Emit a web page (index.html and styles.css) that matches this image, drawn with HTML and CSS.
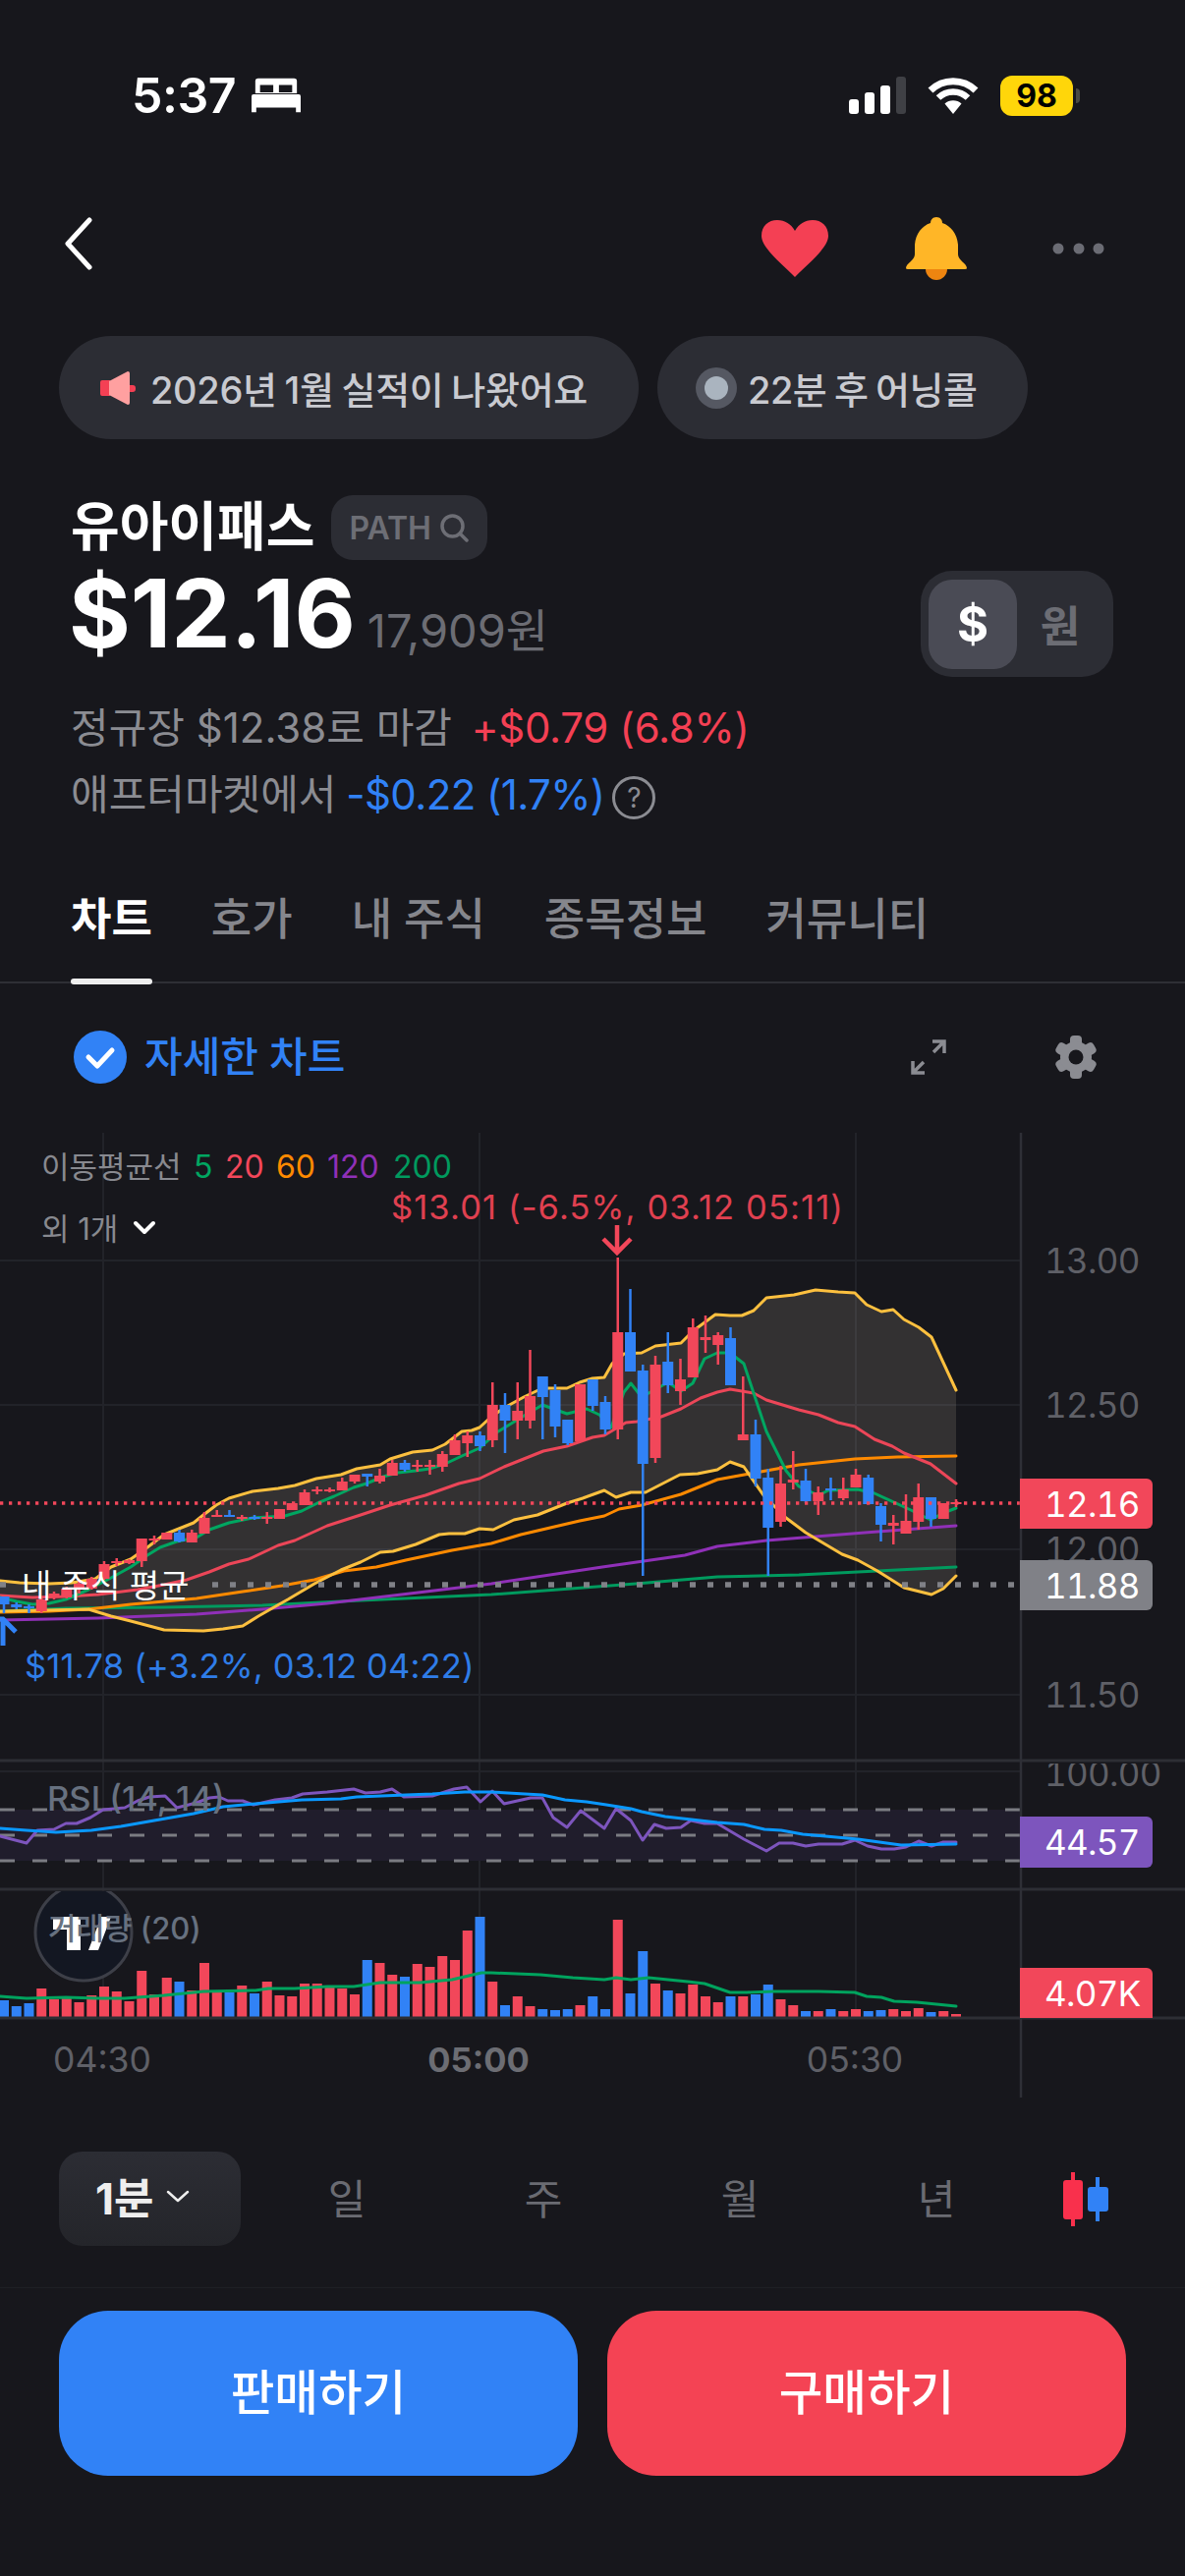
FILE: index.html
```html
<!DOCTYPE html>
<html lang="ko">
<head>
    <meta charset="UTF-8">
    <meta name="viewport" content="width=device-width, initial-scale=1.0">
    <title>유아이패스 차트</title>
    <link rel="stylesheet" href="styles.css">
</head>
<body>
    <div class="status-bar">
        <div class="status-left">
            <span class="clock">5:37</span>
            <svg class="bed" width="50" height="36" viewBox="0 0 52 36">
                <path fill="#fff" d="M7 0h38a3 3 0 0 1 3 3v13H4V3a3 3 0 0 1 3-3z"/>
                <path fill="#17171c" d="M9 7h14v8H9zM29 7h14v8H29z"/>
                <path fill="#fff" d="M2 17h48a2 2 0 0 1 2 2v17h-5v-5H5v5H0V19a2 2 0 0 1 2-2z"/>
            </svg>
        </div>
        <div class="status-right">
            <svg width="58" height="38" viewBox="0 0 58 38">
                <rect x="0" y="23" width="10" height="15" rx="3" fill="#fff"/>
                <rect x="16" y="16" width="10" height="22" rx="3" fill="#fff"/>
                <rect x="32" y="9" width="10" height="29" rx="3" fill="#fff"/>
                <rect x="48" y="0" width="10" height="38" rx="3" fill="#3f4045"/>
            </svg>
            <svg class="wifi" width="52" height="38" viewBox="0 0 52 38">
                <path fill="none" stroke="#fff" stroke-width="7" d="M3 14A33 33 0 0 1 49 14"/>
                <path fill="none" stroke="#fff" stroke-width="6.5" d="M11 21.500A21.500 21.500 0 0 1 41 21.500"/>
                <path fill="#fff" d="M26 38L17.500 27.500A13 13 0 0 1 34.500 27.500z"/>
            </svg>
            <span class="battery">98</span>
        </div>
    </div>

    <div class="nav">
        <svg width="30" height="54" viewBox="0 0 30 54">
            <path fill="none" stroke="#fff" stroke-width="5" stroke-linecap="round" stroke-linejoin="round" d="M26 3L4 27l22 24"/>
        </svg>
        <div class="nav-actions">
            <svg width="68" height="58" viewBox="0 0 68 58">
                <path fill="#f44054" d="M34 58C20 44 0 28 0 16 0 6 7 0 16 0c8 0 14 4 18 11C38 4 44 0 52 0c9 0 16 6 16 16 0 12-20 28-34 42z"/>
            </svg>
            <svg class="bell" width="62" height="64" viewBox="0 0 62 64">
                <path fill="#ee8510" d="M20 53h22c0 6-5 11-11 11s-11-5-11-11z"/>
                <path fill="#ffb627" d="M31 0c-4 0-6 3-6 6-9 3-15 11-16 22v10c0 6-9 9-9 14q0 1 2 1h58q2 0 2-1c0-5-9-8-9-14V28c-1-11-7-19-16-22 0-3-2-6-6-6z"/>
            </svg>
            <svg class="more" width="54" height="12" viewBox="0 0 54 12">
                <circle cx="6" cy="6" r="5.500" fill="#6b6c74"/>
                <circle cx="27" cy="6" r="5.500" fill="#6b6c74"/>
                <circle cx="47" cy="6" r="5.500" fill="#6b6c74"/>
            </svg>
        </div>
    </div>

    <div class="pills">
        <div class="pill pill-earnings">
            <svg width="36" height="34" viewBox="0 0 36 34">
                <path fill="#f44054" d="M2 9h8v16H2a2 2 0 0 1-2-2V11a2 2 0 0 1 2-2zM30 14h3a3 3 0 0 1 3 3v1a3 3 0 0 1-3 3h-3z"/>
                <path fill="#ffa0a0" d="M9 10L28 0a2 2 0 0 1 2 2v30a2 2 0 0 1-2 2L9 24z"/>
            </svg>
            <span>2026년 1월 실적이 나왔어요</span>
        </div>
        <div class="pill pill-call">
            <svg width="42" height="42" viewBox="0 0 42 42">
                <circle cx="21" cy="21" r="21" fill="#555862"/>
                <circle cx="21" cy="21" r="12" fill="#aab4bf"/>
            </svg>
            <span>22분 후 어닝콜</span>
        </div>
    </div>

    <div class="name-row">
        <h1 class="name">유아이패스</h1>
        <div class="ticker">
            <span>PATH</span>
            <svg width="30" height="30" viewBox="0 0 30 30">
                <circle cx="13.500" cy="13.500" r="10.500" fill="none" stroke="#6d6e75" stroke-width="3.500"/>
                <path stroke="#6d6e75" stroke-width="3.500" stroke-linecap="round" d="M21 21l7 7"/>
            </svg>
        </div>
    </div>

    <div class="price-row">
        <div class="price">
            <span class="price-main">$12.16</span>
            <span class="price-krw">17,909원</span>
        </div>
        <div class="currency">
            <span class="currency-on">$</span>
            <span class="currency-off">원</span>
        </div>
    </div>

    <div class="changes">
        <div>정규장 $12.38로 마감 <span class="up">+$0.79 (6.8%)</span></div>
        <div>애프터마켓에서 <span class="down">-$0.22 (1.7%)</span> <span class="help">?</span></div>
    </div>

    <div class="tabs">
        <span class="tab active">차트</span>
        <span class="tab">호가</span>
        <span class="tab">내 주식</span>
        <span class="tab">종목정보</span>
        <span class="tab">커뮤니티</span>
    </div>

    <div class="chart-options">
        <div class="detail-toggle">
            <svg width="54" height="54" viewBox="0 0 54 54">
                <circle cx="27" cy="27" r="27" fill="#3182f6"/>
                <path fill="none" stroke="#fff" stroke-width="5" stroke-linecap="round" stroke-linejoin="round" d="M15 27l9 9 15-16"/>
            </svg>
            <span class="detail-text">자세한 차트</span>
        </div>
        <div class="chart-tools">
            <svg width="36" height="36" viewBox="0 0 36 36">
                <path fill="none" stroke="#8b8c92" stroke-width="3.500" d="M22 2h12v12M34 2L23 13M14 34H2V22M2 34l11-11"/>
            </svg>
            <svg width="44" height="44" viewBox="0 0 44 44">
                <g fill="#8b8c92">
                    <rect x="16" y="0" width="12" height="44" rx="4"/>
                    <rect x="16" y="0" width="12" height="44" rx="4" transform="rotate(60 22 22)"/>
                    <rect x="16" y="0" width="12" height="44" rx="4" transform="rotate(120 22 22)"/>
                    <circle cx="22" cy="22" r="16"/>
                </g>
                <circle cx="22" cy="22" r="7.500" fill="#17171c"/>
            </svg>
        </div>
    </div>

    <svg class="chart" id="chart" width="1206" height="990" viewBox="0 1150 1206 990">
        <defs>
            <clipPath id="rsiClip"><rect x="0" y="1795" width="1206" height="126"/></clipPath>
            <clipPath id="volClip"><rect x="0" y="1925" width="1206" height="128"/></clipPath>
        </defs>

        <path class="grid" d="M105 1153V2054M488 1153V2054M871 1153V2054M0 1283H1039M0 1430H1039M0 1577H1039M0 1725H1039M0 1803H1039"/>

        <g id="mainSeries"></g>

        <path class="price-line" d="M0 1530H1039"/>
        <path class="avg-line" d="M0 1613H6M216 1613H1036"/>

        <path class="arrow arrow-high" d="M628 1247V1275M614 1261L628 1275L642 1261"/>
        <path class="arrow arrow-low" d="M3 1675V1650M-11 1648L3 1648L16 1661"/>

        <text class="label" x="42" y="1187">이동평균선</text>
        <text class="ma ma5" x="197" y="1187">5</text>
        <text class="ma ma20" x="229" y="1187">20</text>
        <text class="ma ma60" x="281" y="1187">60</text>
        <text class="ma ma120" x="333" y="1187">120</text>
        <text class="ma ma200" x="400" y="1187">200</text>
        <text class="label" x="42" y="1250">외 1개</text>
        <path class="chev" d="M138 1245l9 9 9-9"/>
        <text class="note note-high" x="398" y="1228">$13.01 (-6.5%, 03.12 05:11)</text>
        <text class="note note-low" x="25" y="1695">$11.78 (+3.2%, 03.12 04:22)</text>
        <text class="avg-label" x="22" y="1614">내 주식 평균</text>

        <rect class="rsi-band" x="0" y="1842" width="1039" height="52"/>
        <path class="rsi-dash" d="M-33 1842H1039M-33 1868H1039M-33 1894H1039"/>
        <g id="rsiSeries"></g>

        <g clip-path="url(#volClip)">
            <circle cx="85" cy="1967" r="49" fill="#131722" stroke="#3d3f48" stroke-width="3"/>
            <path fill="#fff" d="M54 1951h28v34H68v-21H54zM90 1985l13-34h10l-13 34z"/>
        </g>
        <g id="volSeries"></g>

        <text class="pane-label pane-rsi" x="48" y="1830">RSI (14, 14)</text>
        <text class="pane-label" x="49" y="1962">거래량 (20)</text>

        <path class="pane-line" d="M0 1792H1206M0 1923H1206M0 2054H1206"/>
        <path class="axis" d="M1039 1153V2135"/>

        <text class="tick" x="1063" y="1283">13.00</text>
        <text class="tick" x="1063" y="1430">12.50</text>
        <text class="tick" x="1063" y="1577">12.00</text>
        <text class="tick" x="1063" y="1725">11.50</text>
        <text class="tick" x="1063" y="1805" clip-path="url(#rsiClip)">100.00</text>

        <path class="tag tag-red" d="M1038 1505h129a6 6 0 0 1 6 6v39a6 6 0 0 1-6 6h-129z"/>
        <text class="tag-text" x="1063" y="1531">12.16</text>
        <path class="tag tag-gray" d="M1038 1588h129a6 6 0 0 1 6 6v39a6 6 0 0 1-6 6h-129z"/>
        <text class="tag-text" x="1063" y="1614">11.88</text>
        <path class="tag tag-purple" d="M1038 1849h129a6 6 0 0 1 6 6v40a6 6 0 0 1-6 6h-129z"/>
        <text class="tag-text" x="1063" y="1875">44.57</text>
        <path class="tag tag-red" d="M1038 2003h129a6 6 0 0 1 6 6v45h-135z"/>
        <text class="tag-text" x="1063" y="2029">4.07K</text>

        <text class="time" x="104" y="2096">04:30</text>
        <text class="time time-bold" x="487" y="2096">05:00</text>
        <text class="time" x="870" y="2096">05:30</text>
    </svg>

    <div class="periods">
        <div class="period-select">
            <span>1분</span>
            <svg width="24" height="13" viewBox="0 0 24 13">
                <path fill="none" stroke="#eee" stroke-width="2.500" stroke-linecap="round" stroke-linejoin="round" d="M2 2l10 9 10-9"/>
            </svg>
        </div>
        <span class="period">일</span>
        <span class="period">주</span>
        <span class="period">월</span>
        <span class="period">년</span>
        <svg class="candle-type" width="46" height="55" viewBox="0 0 46 55">
            <path fill="#f9304c" d="M8 0h4v8h5a3 3 0 0 1 3 3v34a3 3 0 0 1-3 3h-5v7H8v-7H3a3 3 0 0 1-3-3V11a3 3 0 0 1 3-3h5z"/>
            <path fill="#3182f6" d="M33 5h4v10h6a3 3 0 0 1 3 3v19a3 3 0 0 1-3 3h-6v10h-4V40h-5a3 3 0 0 1-3-3V18a3 3 0 0 1 3-3h5z"/>
        </svg>
    </div>

    <div class="actions">
        <button class="action sell">판매하기</button>
        <button class="action buy">구매하기</button>
    </div>

    <script src="chart.js"></script>
</body>
</html>
```

FILE: styles.css
```css
* {
    box-sizing: border-box;
}
body {
    margin: 0;
    width: 1206px;
    height: 2622px;
    overflow: hidden;
    background-color: #17171c;
    color: #fff;
    font-family: Inter, "Noto Sans CJK KR", sans-serif;
}
svg {
    display: block;
    flex: none;
}

.status-bar {
    height: 194px;
    display: flex;
    align-items: center;
    justify-content: space-between;
    padding: 0 114px 0 134px;
}
.status-left {
    display: flex;
    align-items: center;
    gap: 16px;
}
.clock {
    font-size: 50px;
    font-weight: 600;
    letter-spacing: -0.5px;
}
.status-right {
    display: flex;
    align-items: center;
}
.wifi {
    margin-left: 22px;
}
.battery {
    position: relative;
    width: 74px;
    height: 41px;
    margin-left: 22px;
    border-radius: 12px;
    background-color: #ffd60a;
    color: #000;
    font-size: 32px;
    font-weight: 700;
    line-height: 41px;
    text-align: center;
}
.battery::after {
    content: "";
    position: absolute;
    left: 77px;
    top: 13px;
    width: 4px;
    height: 15px;
    border-radius: 0 4px 4px 0;
    background-color: #4a4a44;
}

.nav {
    height: 108px;
    display: flex;
    align-items: center;
    justify-content: space-between;
    padding: 0 81px 0 65px;
}
.nav-actions {
    display: flex;
    align-items: center;
    margin-top: 9px;
}
.bell {
    margin-left: 79px;
}
.more {
    margin-left: 87px;
}

.pills {
    display: flex;
    gap: 19px;
    margin-top: 40px;
    padding-left: 60px;
}
.pill {
    height: 105px;
    display: flex;
    align-items: center;
    border-radius: 53px;
    background-color: #2c2d34;
    color: #c9cad0;
    font-size: 38px;
    font-weight: 500;
    letter-spacing: -0.3px;
    word-spacing: -2px;
}
.pill-earnings {
    width: 590px;
    gap: 15px;
    padding-left: 42px;
}
.pill-call {
    width: 377px;
    gap: 11px;
    padding-left: 39px;
    letter-spacing: -0.5px;
}

.name-row {
    display: flex;
    align-items: center;
    gap: 17px;
    height: 66px;
    margin-top: 57px;
    padding-left: 72px;
}
.name {
    margin: 0;
    font-size: 54px;
    font-weight: 700;
    line-height: 70px;
}
.ticker {
    width: 159px;
    height: 66px;
    display: flex;
    align-items: center;
    gap: 8px;
    padding-left: 18px;
    border-radius: 22px;
    background-color: #2c2d34;
    color: #6d6e75;
    font-size: 32px;
    font-weight: 600;
}

.price-row {
    height: 108px;
    display: flex;
    align-items: center;
    justify-content: space-between;
    margin-top: 11px;
    padding: 0 73px 0 70px;
}
.price {
    display: flex;
    align-items: baseline;
    gap: 12px;
    line-height: 108px;
    margin-top: -4px;
}
.price-main {
    font-size: 96px;
    font-weight: 700;
}
.price-krw {
    color: #6c6d74;
    font-size: 47px;
}
.currency {
    width: 196px;
    height: 108px;
    display: flex;
    align-items: center;
    padding-left: 8px;
    border-radius: 32px;
    background-color: #2c2d34;
}
.currency-on {
    width: 90px;
    height: 91px;
    border-radius: 24px;
    background-color: #4a4b55;
    font-size: 49px;
    font-weight: 700;
    line-height: 91px;
    text-align: center;
}
.currency-off {
    width: 88px;
    color: #6c6d74;
    font-size: 44px;
    font-weight: 700;
    text-align: center;
}

.changes {
    margin-top: 18px;
    padding-left: 72px;
    color: #8b8c92;
    font-size: 42px;
    line-height: 68px;
}
.up {
    margin-left: 8px;
    color: #f44054;
    letter-spacing: -0.3px;
}
.down {
    margin-left: -2px;
    color: #3182f6;
    letter-spacing: -0.6px;
}
.help {
    display: inline-block;
    width: 44px;
    height: 44px;
    margin-left: -4px;
    border: 3px solid #8b8c92;
    border-radius: 50%;
    font-size: 28px;
    line-height: 38px;
    text-align: center;
    vertical-align: 2px;
}

.tabs {
    display: flex;
    gap: 60px;
    height: 135px;
    margin-top: 23px;
    padding-left: 72px;
    border-bottom: 2px solid #2e2f35;
}
.tab {
    position: relative;
    color: #85868c;
    font-size: 45px;
    font-weight: 500;
    line-height: 140px;
}
.tab.active {
    color: #fff;
    font-weight: 700;
}
.tab.active::after {
    content: "";
    position: absolute;
    left: 0;
    right: 0;
    bottom: -3px;
    height: 6px;
    border-radius: 3px;
    background-color: #eee;
}

.chart-options {
    height: 149px;
    display: flex;
    align-items: center;
    justify-content: space-between;
    padding: 0 89px 0 75px;
}
.detail-toggle {
    display: flex;
    align-items: center;
    gap: 18px;
    color: #3182f6;
    font-size: 42px;
    font-weight: 500;
}
.detail-text {
    margin-top: -6px;
}
.chart-tools {
    display: flex;
    align-items: center;
    gap: 110px;
}

.chart text {
    dominant-baseline: central;
}
.grid {
    fill: none;
    stroke: #222329;
    stroke-width: 2;
}
.band {
    fill: rgba(255, 235, 210, 0.12);
}
.series {
    fill: none;
    stroke-width: 3;
    stroke-linejoin: round;
    stroke-linecap: round;
}
.bb { stroke: #fdc03f; }
.line-ma5 { stroke: #00a661; }
.line-ma20 { stroke: #ec4658; }
.line-ma60 { stroke: #ff8a00; }
.line-ma120 { stroke: #9030b8; }
.line-ma200 { stroke: #009a5e; }
.line-rsi { stroke: #7d55bd; }
.line-signal { stroke: #0a98ff; }
.line-vol { stroke: #00a35e; }

.wick {
    stroke-width: 2.500;
    fill: none;
}
.red { fill: #f2475a; stroke: #f2475a; }
.blue { fill: #3182f6; stroke: #3182f6; }
.body,
.bar {
    stroke: none;
}

.price-line {
    stroke: #f2475a;
    stroke-width: 3.300;
    stroke-dasharray: 3.300 5.700;
}
.avg-line {
    stroke: #808187;
    stroke-width: 5.500;
    stroke-dasharray: 6 12;
}
.arrow {
    fill: none;
    stroke-width: 4.500;
}
.arrow-high { stroke: #f2475a; }
.arrow-low { stroke: #3182f6; stroke-width: 5; }

.label {
    fill: #88898f;
    font-size: 31px;
}
.ma {
    font-size: 32px;
}
.ma5 { fill: #00a661; }
.ma20 { fill: #f2475a; }
.ma60 { fill: #ff8a00; }
.ma120 { fill: #9030b8; }
.ma200 { fill: #009a5e; }
.chev {
    fill: none;
    stroke: #fff;
    stroke-width: 4;
    stroke-linecap: round;
    stroke-linejoin: round;
}
.note {
    font-size: 34.500px;
}
.note-high {
    fill: #e04050;
    letter-spacing: 1.100px;
}
.note-low {
    fill: #2f7de8;
    letter-spacing: 0.200px;
}
.avg-label {
    fill: #fff;
    font-size: 33px;
}

.rsi-band {
    fill: #201d2c;
}
.rsi-dash {
    fill: none;
    stroke: #7b7c82;
    stroke-width: 3;
    stroke-dasharray: 15 18;
}
.pane-label {
    fill: #677180;
    font-size: 31px;
    font-weight: 500;
}
.pane-rsi {
    font-size: 34.500px;
}
.pane-line {
    fill: none;
    stroke: #2d2e34;
    stroke-width: 3;
}
.axis {
    fill: none;
    stroke: #2e2f36;
    stroke-width: 2.500;
}
.tick,
.tag-text {
    font-size: 35px;
    font-variant-numeric: tabular-nums;
    letter-spacing: -0.700px;
}
.tick {
    fill: #5f6067;
}
.tag-text {
    fill: #fff;
}
.tag-red { fill: #f2475a; }
.tag-gray { fill: #808187; }
.tag-purple { fill: #7d55bd; }
.time {
    fill: #5f6067;
    font-size: 35.500px;
    text-anchor: middle;
}
.time-bold {
    fill: #6c6d73;
    font-size: 34.500px;
    font-weight: 700;
}

.periods {
    height: 96px;
    display: flex;
    align-items: center;
    margin-top: 50px;
    padding-left: 60px;
}
.period-select {
    width: 185px;
    height: 96px;
    display: flex;
    align-items: center;
    gap: 13px;
    padding: 0 0 6px 37px;
    border-radius: 24px;
    background: linear-gradient(#2c2d34, #24252a);
    color: #eee;
    font-size: 44px;
    font-weight: 700;
}
.period {
    width: 200px;
    padding-bottom: 6px;
    color: #6a6b72;
    font-size: 42px;
    text-align: center;
}
.period:first-of-type {
    margin-left: 8px;
}
.candle-type {
    margin-left: 29px;
}

.actions {
    display: flex;
    gap: 30px;
    margin-top: 42px;
    padding: 23px 60px 0;
    border-top: 1px solid #1f2025;
}
.action {
    flex: 1;
    height: 168px;
    padding: 0 0 8px;
    border: none;
    border-radius: 50px;
    color: #fff;
    font-family: inherit;
    font-size: 48.500px;
    font-weight: 500;
}
.sell {
    background-color: #3182f6;
}
.buy {
    background-color: #f44354;
}
```

FILE: chart.js
```js
const NS = 'http://www.w3.org/2000/svg';
const candleX = i => 4 + 12.75 * i;

// wick top, wick bottom, body top, body bottom, colour
const candles = [
    [1625, 1642, 1625, 1633, 'b'], [1631, 1638, 1633, 1636, 'b'], [1633, 1642, 1635, 1637, 'b'], [1627, 1642, 1628, 1640, 'r'],
    [1620, 1628, 1622, 1626, 'r'], [1615, 1627, 1617, 1626, 'r'], [1608, 1622, 1612, 1618, 'r'], [1605, 1618, 1607, 1617, 'r'],
    [1589, 1608, 1592, 1607, 'r'], [1586, 1594, 1589, 1591, 'r'], [1587, 1592, 1588, 1591, 'r'], [1566, 1595, 1566, 1589, 'r'],
    [1563, 1572, 1566, 1568, 'r'], [1560, 1567, 1560, 1567, 'r'], [1557, 1570, 1560, 1569, 'b'], [1557, 1570, 1560, 1570, 'r'],
    [1539, 1561, 1545, 1561, 'r'], [1537, 1544, 1542, 1544, 'r'], [1537, 1544, 1542, 1544, 'b'], [1542, 1548, 1544, 1546, 'r'],
    [1542, 1547, 1544, 1546, 'b'], [1539, 1551, 1544, 1546, 'r'], [1536, 1546, 1536, 1546, 'r'], [1530, 1537, 1530, 1537, 'r'],
    [1516, 1532, 1519, 1532, 'r'], [1513, 1521, 1516, 1518, 'r'], [1514, 1519, 1516, 1518, 'r'], [1504, 1517, 1508, 1517, 'r'],
    [1501, 1510, 1501, 1508, 'r'], [1500, 1513, 1500, 1503, 'b'], [1495, 1510, 1502, 1508, 'r'], [1486, 1502, 1489, 1502, 'r'],
    [1486, 1498, 1489, 1496, 'b'], [1486, 1498, 1491, 1493, 'r'], [1486, 1501, 1491, 1493, 'r'], [1477, 1498, 1480, 1493, 'r'],
    [1460, 1481, 1466, 1481, 'r'], [1457, 1483, 1461, 1469, 'r'], [1457, 1477, 1461, 1472, 'b'], [1407, 1473, 1430, 1466, 'r'],
    [1418, 1479, 1430, 1446, 'b'], [1407, 1465, 1436, 1446, 'r'], [1374, 1454, 1421, 1446, 'r'], [1401, 1465, 1401, 1422, 'b'],
    [1409, 1463, 1415, 1452, 'b'], [1445, 1471, 1445, 1469, 'b'], [1409, 1467, 1409, 1467, 'r'], [1404, 1436, 1404, 1431, 'b'],
    [1421, 1460, 1427, 1455, 'b'], [1280, 1465, 1356, 1455, 'r'], [1312, 1396, 1356, 1396, 'b'], [1389, 1604, 1395, 1490, 'b'],
    [1380, 1489, 1389, 1484, 'r'], [1356, 1418, 1386, 1410, 'b'], [1383, 1430, 1404, 1416, 'r'], [1342, 1402, 1351, 1402, 'r'],
    [1339, 1377, 1361, 1364, 'r'], [1356, 1389, 1359, 1369, 'r'], [1351, 1410, 1362, 1410, 'b'], [1401, 1466, 1460, 1466, 'r'],
    [1445, 1513, 1460, 1505, 'b'], [1495, 1604, 1504, 1555, 'b'], [1492, 1554, 1510, 1549, 'r'], [1477, 1516, 1506, 1509, 'r'],
    [1495, 1530, 1507, 1528, 'b'], [1513, 1542, 1519, 1528, 'r'], [1504, 1527, 1515, 1517, 'b'], [1504, 1527, 1516, 1525, 'r'],
    [1495, 1514, 1501, 1514, 'r'], [1501, 1531, 1504, 1531, 'b'], [1530, 1569, 1533, 1552, 'b'], [1542, 1572, 1550, 1553, 'r'],
    [1521, 1561, 1548, 1561, 'r'], [1510, 1557, 1524, 1549, 'r'], [1524, 1554, 1524, 1546, 'b'], [1530, 1546, 1530, 1546, 'r'],
    [1526, 1534, 1529, 1531, 'r']
];

// positive is a red bar, negative a blue one
const volumes = [
    -17, -11, -14, 29, 18, 21, 15, 22, 31, 26, 16, 47, 23, 40, -36, 27, 55, 25, -25, 32,
    -24, 36, 22, 21, 34, 34, 32, 29, 23, -58, 55, 43, -41, 54, 51, 62, 58, 88, -102, 36,
    -12, 21, 11, -8, -7, -8, 12, -21, -8, 99, -24, -67, 34, -27, 24, 33, 21, 15, -21, 21,
    -23, -33, 18, 12, -6, 6, -8, 6, 8, -6, -7, 8, 6, 9, -5, 6, 3
];

const bbUpper = '0,1609 20,1611 50,1612 73,1611 97,1607 113,1595 133,1587 150,1575 167,1562 182,1556 197,1550 207,1542 220,1532 233,1525 257,1518 283,1515 300,1512 322,1505 347,1501 363,1495 387,1491 397,1485 420,1478 440,1476 453,1470 470,1457 480,1456 488,1453 500,1442 513,1433 533,1422 552,1413 577,1413 590,1407 603,1403 615,1402 623,1388 635,1378 653,1377 667,1370 693,1367 705,1355 728,1338 743,1339 755,1339 767,1334 780,1321 808,1318 830,1313 853,1315 870,1316 882,1328 897,1335 909,1333 920,1343 935,1351 948,1361 973,1415';
const bbLower = '0,1640 90,1638 113,1645 133,1650 167,1659 207,1660 227,1658 247,1655 263,1645 277,1637 293,1628 320,1612 347,1598 367,1590 387,1580 400,1579 423,1572 447,1562 457,1561 473,1561 488,1556 502,1557 523,1547 547,1542 577,1530 593,1525 615,1517 627,1524 642,1519 657,1519 692,1501 710,1500 730,1496 743,1488 757,1493 777,1522 800,1545 820,1560 857,1582 873,1588 893,1599 920,1616 948,1623 960,1617 973,1604';

const mainLines = {
    'line-ma200': '0,1640 67,1637 167,1636 267,1634 367,1629 500,1623 647,1612 730,1605 813,1603 973,1595',
    'line-ma120': '0,1649 100,1647 200,1643 267,1638 333,1632 417,1622 500,1612 613,1595 697,1583 730,1574 780,1568 880,1560 973,1553',
    'line-ma60': '0,1641 50,1640 90,1638 133,1633 167,1630 200,1627 247,1620 287,1614 320,1608 350,1599 383,1595 413,1588 460,1578 500,1571 530,1562 590,1548 615,1543 630,1536 653,1532 693,1521 730,1506 763,1500 813,1491 870,1485 913,1483 973,1482',
    'line-ma20': '0,1624 33,1626 67,1625 100,1623 140,1618 167,1613 190,1608 213,1600 233,1592 253,1587 283,1573 300,1568 333,1553 367,1542 397,1532 433,1522 467,1510 488,1505 513,1493 533,1485 553,1477 577,1472 603,1463 615,1461 637,1448 648,1447 673,1442 693,1434 713,1423 730,1417 743,1414 767,1418 780,1425 813,1435 833,1440 853,1448 870,1452 890,1465 908,1472 920,1479 947,1490 973,1510',
    'line-ma5': '0,1626 17,1630 33,1633 50,1632 67,1628 90,1618 113,1606 133,1595 150,1583 163,1575 180,1569 200,1565 213,1557 233,1550 257,1545 290,1543 307,1538 323,1530 340,1523 360,1514 373,1510 390,1503 405,1499 423,1497 437,1495 453,1490 470,1482 488,1474 507,1457 530,1443 552,1430 577,1439 597,1434 610,1440 622,1453 635,1417 642,1408 653,1422 680,1407 693,1416 705,1408 717,1383 730,1377 743,1377 757,1388 770,1427 780,1457 800,1497 813,1513 833,1522 843,1517 873,1516 890,1520 927,1537 947,1547 960,1540 973,1535'
};

const rsiLine = '0,1869 27,1876 38,1863 55,1862 67,1856 78,1856 92,1850 105,1842 127,1840 140,1833 152,1829 168,1828 180,1840 200,1835 213,1830 223,1829 232,1833 247,1833 258,1837 280,1832 297,1830 308,1826 333,1824 360,1821 372,1825 387,1824 399,1821 411,1829 440,1828 462,1821 475,1819 489,1834 501,1823 513,1836 540,1830 552,1830 563,1850 577,1860 591,1843 615,1861 627,1841 642,1853 654,1873 666,1857 678,1861 693,1860 703,1853 717,1856 730,1856 757,1872 780,1884 793,1876 807,1876 820,1879 833,1877 857,1877 870,1873 883,1879 897,1882 910,1882 922,1880 935,1874 948,1879 960,1875 973,1875';
const signalLine = '0,1861 27,1863 57,1865 93,1863 123,1859 157,1853 197,1846 227,1839 260,1836 307,1832 347,1831 363,1829 413,1827 440,1826 473,1824 500,1824 552,1827 575,1832 597,1834 617,1837 642,1841 653,1844 677,1849 730,1855 757,1857 778,1862 795,1863 817,1867 840,1869 873,1872 917,1878 973,1877';
const volLine = '0,2032 27,2034 67,2033 100,2034 127,2034 167,2031 207,2027 260,2026 273,2024 300,2024 333,2022 360,2022 387,2018 427,2018 460,2015 490,2008 500,2008 550,2010 583,2013 615,2015 627,2013 642,2015 660,2013 700,2017 717,2019 743,2028 760,2028 787,2027 833,2027 870,2028 882,2032 897,2033 910,2037 933,2038 973,2042';

function el(parent, tag, attrs) {
    const node = document.createElementNS(NS, tag);
    for (const key in attrs) {
        node.setAttribute(key, attrs[key]);
    }
    parent.appendChild(node);
    return node;
}

function line(parent, cls, points) {
    el(parent, 'polyline', { class: 'series ' + cls, points });
}

const main = document.getElementById('mainSeries');
const lowerReversed = bbLower.split(' ').reverse().join(' ');
el(main, 'polygon', { class: 'band', points: bbUpper + ' ' + lowerReversed });
for (const cls in mainLines) {
    line(main, cls, mainLines[cls]);
}
line(main, 'bb', bbUpper);
line(main, 'bb', bbLower);

candles.forEach((c, i) => {
    const x = candleX(i);
    const colour = c[4] === 'r' ? 'red' : 'blue';
    el(main, 'path', { class: 'wick ' + colour, d: `M${x} ${c[0]}V${c[1]}` });
    el(main, 'rect', { class: 'body ' + colour, x: x - 5.5, y: c[2], width: 11, height: c[3] - c[2] });
});

const rsi = document.getElementById('rsiSeries');
line(rsi, 'line-rsi', rsiLine);
line(rsi, 'line-signal', signalLine);

const vol = document.getElementById('volSeries');
volumes.forEach((v, i) => {
    const h = Math.abs(v);
    el(vol, 'rect', { class: 'bar ' + (v > 0 ? 'red' : 'blue'), x: candleX(i) - 5, y: 2053 - h, width: 10, height: h });
});
line(vol, 'line-vol', volLine);
```
